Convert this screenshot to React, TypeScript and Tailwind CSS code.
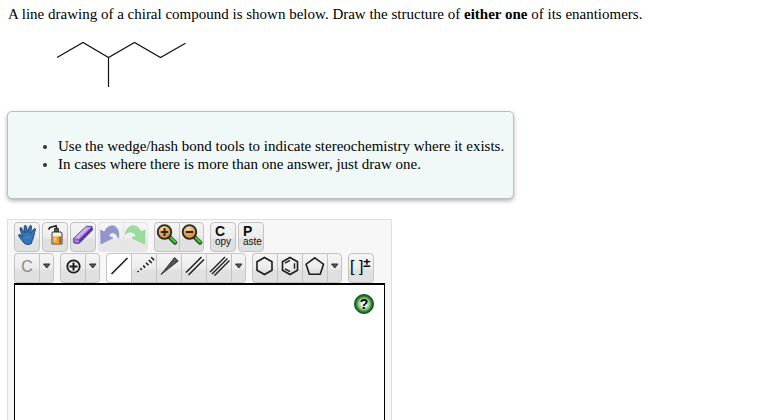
import type { ReactNode } from "react"
import clsx from "clsx"

interface ToolProps {
  label: string
  wide?: boolean
  narrow?: boolean
  active?: boolean
  disabled?: boolean
  children: ReactNode
}

export default function App() {
  return (
    <main className="bg-white px-[7px] pt-[5px] font-['Liberation_Serif',serif] text-[15px] leading-[18px] text-black">
      <p className="px-px">
        A line drawing of a chiral compound is shown below. Draw the structure of <b>either one</b> of its enantiomers.
      </p>

      <Molecule />

      <section className="mt-5 w-fit rounded-[5px] border border-[#b9c0c0] bg-[#f0f9f8] py-[25px] pr-[9px] pl-[50px] shadow-[0_2px_4px_rgba(0,0,0,0.3)]">
        <ul className="list-disc marker:text-[#333]">
          <li>Use the wedge/hash bond tools to indicate stereochemistry where it exists.</li>
          <li>In cases where there is more than one answer, just draw one.</li>
        </ul>
      </section>

      <section
        aria-label="Structure editor"
        className="mt-5 w-full max-w-[385px] border border-[#dfdfdf] bg-[#f7f7f7] px-[6px] pt-[2px] pb-[6px] font-['Liberation_Sans',sans-serif]"
      >
        <div className="flex gap-[6px]">
          <div className="flex gap-[2px]">
            <Group><Tool wide label="Move"><HandIcon /></Tool></Group>
            <Group><Tool wide label="Clear"><BottleIcon /></Tool></Group>
            <Group><Tool wide label="Erase"><EraserIcon /></Tool></Group>
            <Group>
              <Tool label="Undo" disabled><UndoIcon /></Tool>
              <Tool label="Redo" disabled><RedoIcon /></Tool>
            </Group>
          </div>
          <Group>
            <Tool label="Zoom in"><ZoomIcon id="in" plus /></Tool>
            <Tool label="Zoom out"><ZoomIcon id="out" /></Tool>
          </Group>
          <div className="flex gap-[2px]">
            <Group><Tool wide label="Copy"><Word first="C" rest="opy" /></Tool></Group>
            <Group><Tool wide label="Paste"><Word first="P" rest="aste" /></Tool></Group>
          </div>
        </div>

        <div className="mt-px flex gap-[6px]">
          <Group>
            <Tool label="Atom"><span className="w-6 pb-[3px] text-center text-[16px] text-[#888]">C</span></Tool>
            <Tool narrow label="More atoms"><Arrow /></Tool>
          </Group>
          <Group>
            <Tool label="Increase charge">
              <Icon>
                <circle cx="13.5" cy="13.5" r="6.2" strokeWidth="1.8" />
                <path d="M13.5 9.5v8M9.5 13.5h8" strokeWidth="2" />
              </Icon>
            </Tool>
            <Tool narrow label="More charges"><Arrow /></Tool>
          </Group>
          <Group>
            <Tool label="Single bond" active><Icon><path d="M5.5 21L21.5 5" strokeWidth="1.6" /></Icon></Tool>
            <Tool label="Hash bond">
              <Icon>
                <path
                  d="M6.6 18l1 1M9.4 15.4l1.4 1.4M12.2 12.6l2 2M15 9.8l2.5 2.5M17.8 7l3 3M20.2 4.2l3 3"
                  strokeWidth="1.6"
                />
              </Icon>
            </Tool>
            <Tool label="Wedge bond"><Icon><path d="M5 21.5L18.6 4.6L22.2 8z" fill="#555" stroke="#333" strokeWidth="1" strokeLinejoin="round" /></Icon></Tool>
            <Tool label="Double bond"><Icon><path d="M5 19.5L20.5 4M7.5 22L23 6.5" strokeWidth="1.5" /></Icon></Tool>
            <Tool label="Triple bond"><Icon><path d="M4 19L19 4M6 21L21.5 5.5M8.5 22.5L23.5 7.5" strokeWidth="1.4" /></Icon></Tool>
            <Tool narrow label="More bonds"><Arrow /></Tool>
          </Group>
          <Group>
            <Tool label="Cyclohexane ring"><Icon><path d="M12.5 4.5l7.5 4.2v8.6l-7.5 4.2l-7.5-4.2v-8.6z" strokeWidth="1.6" /></Icon></Tool>
            <Tool label="Benzene ring">
              <Icon>
                <path d="M13 4.5l7.5 4.2v8.6l-7.5 4.2l-7.5-4.2v-8.6z" strokeWidth="1.6" />
                <path d="M8 10.2l5-2.9M17.5 10.2v5.6M8 15.8l5 2.9" strokeWidth="1.4" />
              </Icon>
            </Tool>
            <Tool label="Cyclopentane ring"><Icon><path d="M12.8 4.8l8.7 6.4l-3.3 10h-10.8l-3.3-10z" strokeWidth="1.6" /></Icon></Tool>
            <Tool narrow label="More rings"><Arrow /></Tool>
          </Group>
          <Group>
            <Tool wide label="Bracket with charge">
              <span className="flex pb-[3px] pl-px text-[16px] leading-[18px] text-black">
                [&nbsp;]<span className="text-[13px] leading-[10px] font-bold">±</span>
              </span>
            </Tool>
          </Group>
        </div>

        <div className="flex h-[320px] justify-end border-x border-t-2 border-b border-black bg-white px-[10px] py-[9px]">
          <button
            type="button"
            aria-label="Help"
            className="flex size-5 items-center justify-center rounded-full border border-[#0d4d12] bg-[radial-gradient(circle,#f4fbf0_15%,#9fcb91_42%,#237a28_62%,#0d5a14_80%)] text-[14px] leading-none font-bold text-black"
          >
            ?
          </button>
        </div>
      </section>
    </main>
  )
}

function Group({ children }: { children: ReactNode }) {
  return (
    <div className="flex [&>button:first-child]:rounded-l-[4px] [&>button:last-child]:rounded-r-[4px] [&>button:last-child]:border-r">
      {children}
    </div>
  )
}

function Tool({ label, wide, narrow, active, disabled, children }: ToolProps) {
  return (
    <button
      type="button"
      aria-label={label}
      title={label}
      disabled={disabled}
      className={clsx(
        "flex h-[30px] shrink-0 items-center border-y border-l",
        wide ? "w-[26px]" : narrow ? "w-[15px]" : "w-[25px]",
        active ? "bg-white" : "bg-linear-to-b from-[#f5f5f5] from-0% via-[#ececec] via-50% to-[#e0e0e0] to-60%",
        disabled ? "border-[#dcdcdc] opacity-70" : "border-[#c4c4c4]",
      )}
    >
      {children}
    </button>
  )
}

// 1px in from the button's border on the left and top
function Icon({ children }: { children: ReactNode }) {
  return (
    <svg className="h-7 w-6 shrink-0 overflow-visible" viewBox="1 1 24 28" fill="none" stroke="#1c1c1c" aria-hidden="true">
      {children}
    </svg>
  )
}

function Arrow() {
  return (
    <svg className="h-7 w-[14px] shrink-0" viewBox="1 1 14 28" aria-hidden="true">
      <path d="M4.5 11h6.5l-3.2 4z" fill="#555" stroke="#333" />
    </svg>
  )
}

function Word({ first, rest }: { first: string; rest: string }) {
  return (
    <span className="flex flex-col pb-[3px] pl-[4px] text-left">
      <span className="text-[14px] leading-[12px] font-bold text-[#111]">{first}</span>
      <span className="text-[10px] leading-[10px] text-[#111]">{rest}</span>
    </span>
  )
}

function Molecule() {
  return (
    <svg className="mt-[18px] ml-[49px] block" width="132" height="50" viewBox="0 0 132 50" fill="none" stroke="#111" strokeWidth="1.2" role="img" aria-label="3-methylhexane">
      <path d="M1 16.5L27 1.5L52.5 16.5L78.5 1.5L104.5 16.5L129.5 2.2M52.5 16.5V46" />
    </svg>
  )
}

function HandIcon() {
  return (
    <Icon>
      <path
        d="M10.5 21.5C9 19.5 6.5 17 4.8 14.2C4 12.5 5.5 11.7 6.7 13L8.5 14.5L6 7.2C5.6 5.5 7.4 5 8 6.5L10.5 11L10.2 4.5C10.2 3 12.2 3 12.5 4.5L13.5 10.5L15.5 4.2C16 2.8 17.8 3.3 17.5 4.9L16.8 11.2L19.7 7C20.7 5.8 22 6.7 21.3 8.2C20 11.2 20 16 18 19L17.5 21.5C15.5 22.7 12.5 22.7 10.5 21.5Z"
        fill="#3574b5"
        stroke="#173e73"
        strokeWidth="0.9"
      />
      <path d="M11 15c1.5 1 4 1 5.5-.5" stroke="#5c98d0" strokeWidth="0.8" />
    </Icon>
  )
}

function BottleIcon() {
  return (
    <Icon>
      <path d="M6.5 7.5L8 5.5L14 3.8L15 8" stroke="#222" strokeWidth="1.7" />
      <path d="M12.5 6.5h4v3.5h-4z" fill="#555" stroke="#222" strokeWidth="0.8" />
      <path d="M10.5 10h8.5l1 1.5v10.5h-10v-10.5z" fill="#f6f1e8" stroke="#3a3128" />
      <path d="M10.6 14.5h8.8v7h-8.8z" fill="#e8992e" stroke="none" />
      <path d="M17.2 14.5h2.2v7h-2.2z" fill="#a9601b" stroke="none" />
      <path d="M12 15.5h2.5v4h-2.5z" fill="#fbc978" stroke="none" />
    </Icon>
  )
}

function EraserIcon() {
  return (
    <Icon>
      <path d="M3.5 16.5L16.5 4.2L22 4.5L22.5 8L9 21.5L4 21Z" fill="#5a3799" stroke="#3b2470" strokeWidth="0.8" />
      <path d="M3.8 16.5L16.5 4.5L21.8 4.9L9 17.5Z" fill="#bd95ee" stroke="none" />
      <path d="M4 17L9 18V21L4.5 20.5Z" fill="#a97ae4" stroke="none" />
      <path d="M7 15.5L17 6" stroke="#dcc4fb" strokeWidth="1.5" />
    </Icon>
  )
}

function UndoIcon() {
  return (
    <Icon>
      <path
        d="M2.5 8L6.5 10C8.5 5 12.5 3 16 4C20.5 6 21.5 11 20.5 16.5C19 12.5 16.5 10 13.5 11C12 11.5 11.2 12.5 10.8 14L15 16L3 22Z"
        fill="#666dba"
        stroke="#565ca6"
        strokeWidth="0.6"
      />
    </Icon>
  )
}

function RedoIcon() {
  return (
    <Icon>
      <path
        d="M22 8L18 10C16 5 12 3 8.5 4C4.5 5.5 2.5 8.5 2.5 12.5C5 9.5 8 9.5 10.5 11C12 11.8 12.8 12.8 13.2 14L9 16L21.5 22Z"
        fill="#76d278"
        stroke="#57b15c"
        strokeWidth="0.6"
      />
    </Icon>
  )
}

function ZoomIcon({ id, plus }: { id: string; plus?: boolean }) {
  return (
    <Icon>
      <defs>
        <radialGradient id={`lens-${id}`} cx="40%" cy="30%" r="70%">
          <stop offset="0" stopColor="#ffd9a0" />
          <stop offset="1" stopColor="#c9822f" />
        </radialGradient>
      </defs>
      <path d="M15.5 15L21 20.5" stroke="#1d4a1b" strokeWidth="4.5" strokeLinecap="round" />
      <path d="M17 16L21 20" stroke="#4fb844" strokeWidth="2.5" strokeLinecap="round" />
      <circle cx="10.5" cy="10" r="6.8" fill={`url(#lens-${id})`} stroke="#2b2622" strokeWidth="1.8" />
      <path d={plus ? "M10.5 6.3v7.4M6.8 10h7.4" : "M6.8 10h7.4"} stroke="#33261a" strokeWidth="2.2" />
    </Icon>
  )
}
